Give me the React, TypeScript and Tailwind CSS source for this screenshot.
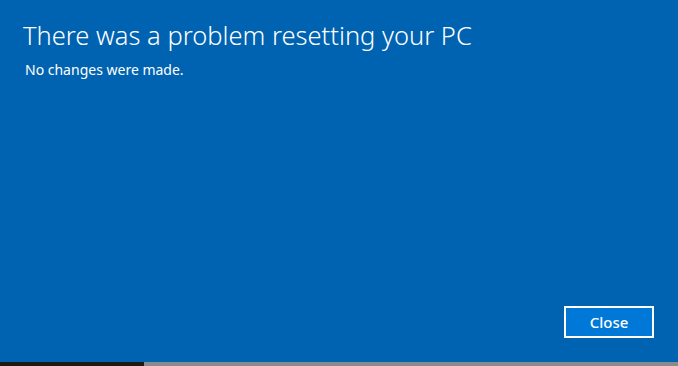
export default function App() {
  return (
    <div className="flex h-[366px] w-[678px] flex-col overflow-hidden font-['Noto_Sans',sans-serif]">
      <div className="flex flex-1 flex-col bg-[#0063b1] text-white">
        <h1 className="ml-[23px] mt-[18px] text-[25.5px] font-light leading-[34px]">
          There was a problem resetting your PC
        </h1>
        <p className="ml-[25px] mt-[9px] text-[14px] leading-[18px]">No changes were made.</p>
        <div className="mt-auto mb-[24px] mr-[24px] flex justify-end">
          <button className="h-[32px] w-[90px] border-2 border-white bg-[#0078d7] text-[15px] font-medium leading-none text-white">
            Close
          </button>
        </div>
      </div>
      <div className="flex h-[4px]">
        <div className="w-[144px] bg-[#1c1a14]" />
        <div className="flex-1 bg-[#8a8a8a]" />
      </div>
    </div>
  )
}
